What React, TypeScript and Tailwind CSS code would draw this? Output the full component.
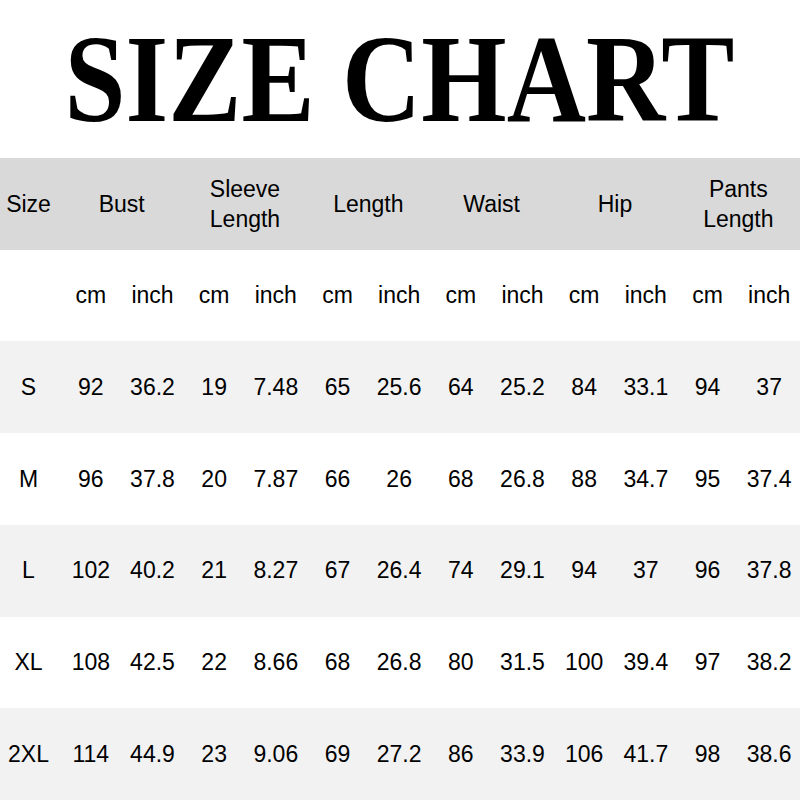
import React from "react";

interface SizeRow {
  size: string;
  values: string[];
}

const groups: { label: React.ReactNode }[] = [
  { label: "Bust" },
  { label: <>Sleeve<br />Length</> },
  { label: "Length" },
  { label: "Waist" },
  { label: "Hip" },
  { label: <>Pants<br />Length</> },
];

const rows: SizeRow[] = [
  { size: "S", values: ["92", "36.2", "19", "7.48", "65", "25.6", "64", "25.2", "84", "33.1", "94", "37"] },
  { size: "M", values: ["96", "37.8", "20", "7.87", "66", "26", "68", "26.8", "88", "34.7", "95", "37.4"] },
  { size: "L", values: ["102", "40.2", "21", "8.27", "67", "26.4", "74", "29.1", "94", "37", "96", "37.8"] },
  { size: "XL", values: ["108", "42.5", "22", "8.66", "68", "26.8", "80", "31.5", "100", "39.4", "97", "38.2"] },
  { size: "2XL", values: ["114", "44.9", "23", "9.06", "69", "27.2", "86", "33.9", "106", "41.7", "98", "38.6"] },
];

function App() {
  return (
    <div className="w-[800px] h-[800px] bg-white flex flex-col text-black font-['Liberation_Sans','Arial',sans-serif] text-[23px]">
      {/* Title */}
      <div className="h-[158px] shrink-0 flex items-center justify-center pt-[2px]">
        <h1 className="font-['Liberation_Serif','Times_New_Roman',serif] font-bold text-[124px] leading-none scale-x-[0.885] whitespace-nowrap">
          SIZE CHART
        </h1>
      </div>

      {/* Table */}
      <div className="flex-1 grid grid-cols-[60px_repeat(12,minmax(0,1fr))] grid-rows-[repeat(7,minmax(0,1fr))]">
        {/* Header */}
        <div className="bg-[#d9d9d9] flex items-center justify-center pr-[3px]">Size</div>
        {groups.map((g, i) => (
          <div
            key={i}
            className="col-span-2 bg-[#d9d9d9] flex items-center justify-center text-center leading-[30px]"
          >
            <span>{g.label}</span>
          </div>
        ))}

        {/* Units */}
        <div className="bg-white" />
        {groups.map((_, i) => (
          <React.Fragment key={i}>
            <div className="flex items-center justify-center">cm</div>
            <div className="flex items-center justify-center">inch</div>
          </React.Fragment>
        ))}

        {/* Body */}
        {rows.map((row, r) => {
          const bg = r % 2 === 0 ? "bg-[#f2f2f2]" : "bg-white";
          return (
            <React.Fragment key={row.size}>
              <div className={`${bg} flex items-center justify-center pr-[3px]`}>{row.size}</div>
              {row.values.map((v, i) => (
                <div key={i} className={`${bg} flex items-center justify-center`}>
                  {v}
                </div>
              ))}
            </React.Fragment>
          );
        })}
      </div>
    </div>
  );
}

export default App;
